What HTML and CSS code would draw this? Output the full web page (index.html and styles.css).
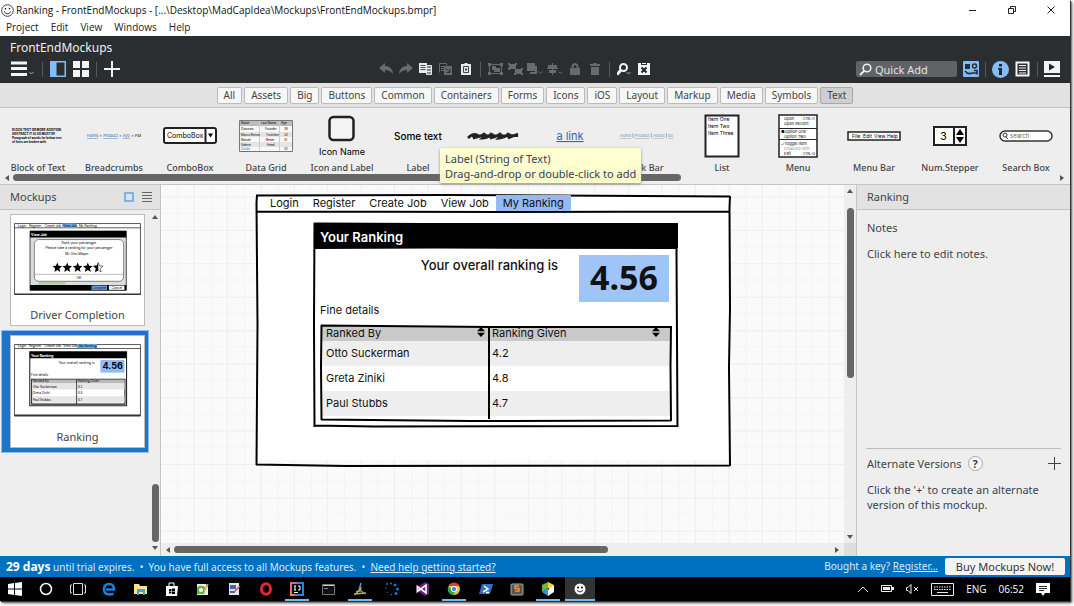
FILE: index.html
```html
<!DOCTYPE html>
<html lang="en">
<head>
  <meta charset="utf-8">
  <title>Ranking - FrontEndMockups</title>
  <link rel="stylesheet" href="styles.css">
</head>
<body>
<div class="window">

  <div class="titlebar">
    <svg class="app-icon" width="13" height="13" viewBox="0 0 13 13"><circle cx="6.5" cy="6.5" r="5.8" fill="#fff" stroke="#444"/><circle cx="4.5" cy="4.8" r=".8"/><circle cx="8.5" cy="4.8" r=".8"/><path d="M3 7.5q3.5 4.5 7 0" fill="none" stroke="#333"/></svg>
    <span class="title">Ranking - FrontEndMockups - [...\Desktop\MadCapIdea\Mockups\FrontEndMockups.bmpr]</span>
    <div class="controls">
      <button aria-label="Minimize"><svg width="8" height="8"><path d="M0 4.5h7" stroke="#222"/></svg></button>
      <button aria-label="Restore"><svg width="8" height="8" fill="none" stroke="#222"><path d="M.5 2.5h5v5h-5zM2.5 2.5v-2h5v5h-2"/></svg></button>
      <button aria-label="Close"><svg width="8" height="8"><path d="M.5.5l7 7M7.5.5l-7 7" stroke="#222"/></svg></button>
    </div>
  </div>

  <nav class="menubar">
    <button>Project</button><button>Edit</button><button>View</button><button>Windows</button><button>Help</button>
  </nav>

  <header class="header">
    <h1>FrontEndMockups</h1>
    <div class="toolbar">
      <div class="tools-left">
        <button aria-label="Menu"><svg width="24" height="16" viewBox="0 0 24 16"><path d="M0 2h16M0 7.500h16M0 13.500h16" stroke="#f4f4f4" stroke-width="3"/><path d="M18.500 11l2 2 2-2" fill="none" stroke="#aaa"/></svg></button>
        <span class="sep"></span>
        <button aria-label="Show navigator"><svg width="16" height="16"><path d="M0 0h16v16H0z" fill="#84bdf5"/><path d="M6.500 1.500h8v13h-8z" fill="#2a2e31"/></svg></button>
        <button aria-label="Show grid"><svg width="16" height="16" fill="#f4f4f4"><path d="M0 0h7v7H0zM9 0h7v7H9zM0 9h7v7H0zM9 9h7v7H9z"/></svg></button>
        <span class="sep"></span>
        <button aria-label="New mockup"><svg width="16" height="16"><path d="M8 0v16M0 8h16" stroke="#f4f4f4" stroke-width="2"/></svg></button>
      </div>
      <div class="tools-mid">
        <button aria-label="Undo"><svg width="14" height="12"><path d="M0 5L6 0v3q7 0 8 8-3-4-8-4v3z" fill="#686b6d"/></svg></button>
        <button aria-label="Redo"><svg width="14" height="12"><path d="M14 5L8 0v3q-7 0-8 8 3-4 8-4v3z" fill="#686b6d"/></svg></button>
        <button aria-label="Copy"><svg width="14" height="12"><path d="M0 0h8v10H0z" fill="#e8e8e8"/><path d="M1.500 2.500h5M1.500 4.500h5M1.500 6.500h5" stroke="#555"/><path d="M7.500 2.500h5v9h-5z" fill="#888" stroke="#e8e8e8"/><path d="M8 5.500h4M8 8.500h4" stroke="#e8e8e8"/></svg></button>
        <button aria-label="Duplicate"><svg width="14" height="12"><path d="M.5 9.500v-9h7v2M2 3.500h3M2 5.500h3M2 7.500h3" fill="none" stroke="#686b6d"/><path d="M5 3h8v9H5z" fill="#686b6d"/><path d="M6.500 5l4 4M11 6v3.500H7.500" stroke="#2a2e31" fill="none"/></svg></button>
        <button aria-label="Paste"><svg width="12" height="12"><path d="M1 1h3l1-1h2l1 1h3v11H1z" fill="#e8e8e8"/><path d="M3.500 3.500h5v6h-5z" fill="none" stroke="#444"/><path d="M5 5.500h2v2H5z" fill="#444"/></svg></button>
        <span class="sep"></span>
        <button aria-label="Group"><svg width="15" height="12" fill="#686b6d"><path d="M1.500 1.500h12v9h-12z" fill="none" stroke="#686b6d"/><path d="M0 0h3v3H0zM12 0h3v3h-3zM0 9h3v3H0zM12 9h3v3h-3zM4 3h4v4H4zM7 5h5v4H6z"/></svg></button>
        <button aria-label="Ungroup"><svg width="15" height="12" fill="#686b6d"><path d="M1 1h7v5H1zM7 6h7v5H7z"/><path d="M0 0h2v2H0zM7 0h2v2H7zM0 5h2v2H0zM13 5h2v2h-2zM13 10h2v2h-2zM6 10h2v2H6z"/></svg></button>
        <button aria-label="Order"><svg width="16" height="12"><path d="M0 0h8v8H0z" fill="#686b6d"/><path d="M9 3v7H3" fill="none" stroke="#686b6d" stroke-width="2"/><path d="M11.500 8.500l2 2 2-2" fill="none" stroke="#686b6d"/></svg></button>
        <button aria-label="Align"><svg width="16" height="12"><path d="M1 2h9v3H1zM2 7h7v3H2z" fill="#686b6d"/><path d="M5.500 0v12M0 5.500h11" stroke="#686b6d"/><path d="M11.500 8.500l2 2 2-2" fill="none" stroke="#686b6d"/></svg></button>
        <button aria-label="Lock"><svg width="10" height="12"><path d="M0 5h10v7H0z" fill="#686b6d"/><path d="M2.500 6V3q2.500-4 5 0v3" fill="none" stroke="#686b6d" stroke-width="2"/></svg></button>
        <button aria-label="Delete"><svg width="10" height="12" fill="#686b6d"><path d="M0 1h3l1-1h2l1 1h3v2H0zM1 4h8v8H1z"/></svg></button>
        <span class="sep"></span>
        <button aria-label="Zoom"><svg width="14" height="13" fill="none"><circle cx="6.500" cy="4.500" r="3.500" stroke="#f4f4f4" stroke-width="2"/><path d="M4 7l-4 4.500" stroke="#f4f4f4" stroke-width="3"/><path d="M9.500 9l2 2 2-2" stroke="#aaa"/></svg></button>
        <button aria-label="Toggle markup"><svg width="12" height="12"><path d="M0 0h3v2h6V0h3v12H0z" fill="#f4f4f4"/><path d="M4 0h4v1H4z" fill="#f4f4f4"/><path d="M3.500 4.500l5 5M8.500 4.500l-5 5" stroke="#222" stroke-width="2"/></svg></button>
      </div>
      <div class="tools-right">
        <label class="quick-add">
          <svg width="13" height="13"><circle cx="8" cy="5" r="3.800" fill="none" stroke="#eee" stroke-width="1.600"/><path d="M5.500 7.500L1 12" stroke="#eee" stroke-width="2"/></svg>
          <input type="text" placeholder="Quick Add" aria-label="Quick Add">
        </label>
        <button aria-label="UI library"><svg width="16" height="16"><rect width="16" height="16" rx="1" fill="#84bdf5"/><path d="M2 3h5v5H2z" fill="#2a2e31"/><circle cx="11.500" cy="5" r="2" fill="none" stroke="#2a2e31" stroke-width="1.500"/><path d="M2 10q3 4 7 2h5M11 9.500h3v4" fill="none" stroke="#2a2e31" stroke-width="1.600"/></svg></button>
        <span class="sep"></span>
        <button aria-label="Information"><svg width="17" height="17"><circle cx="8.500" cy="8.500" r="8.500" fill="#84bdf5"/><path d="M7 3h3v2.500H7zM6 7h4v7H7V8.500H6z" fill="#20262b"/></svg></button>
        <button aria-label="Notes"><svg width="16" height="16"><path d="M1.500 1.500h12v13h-12z" fill="none" stroke="#f4f4f4" stroke-width="2"/><path d="M4 4.500h7M4 7h7M4 9.500h7M4 12h7" stroke="#f4f4f4"/></svg></button>
        <span class="sep"></span>
        <button aria-label="Full screen"><svg width="16" height="16"><path d="M0 0h16v12H0zM0 14h16v2H0z" fill="#f4f4f4"/><path d="M5 2.500l6 3.500-6 3.500z" fill="#20262b"/></svg></button>
      </div>
    </div>
  </header>

  <nav class="tabs">
    <button>All</button><button>Assets</button><button>Big</button><button>Buttons</button><button>Common</button><button>Containers</button><button>Forms</button><button>Icons</button><button>iOS</button><button>Layout</button><button>Markup</button><button>Media</button><button>Symbols</button><button class="active">Text</button>
  </nav>

  <section class="library">
    <ul class="items">
      <li><div class="pic"><svg width="54" height="16" viewBox="0 0 54 16"><g class="tiny" font-weight="bold"><text x="1" y="3">BLOCK TEXT OR MORE ADDITION</text><text x="1" y="7">ABSTRACT IT ALSO MUST BE</text><text x="1" y="11">Paragraph of words for below text</text><text x="1" y="15">of lines are broken with</text></g></svg></div><span>Block of Text</span></li>
      <li><div class="pic"><svg width="54" height="8" viewBox="0 0 54 8"><g class="tiny4"><text x="0" y="5"><tspan class="blue">Home</tspan> &gt; <tspan class="blue">Product</tspan> &gt; <tspan class="blue">Xyz</tspan> &gt; Feature</text></g></svg></div><span>Breadcrumbs</span></li>
      <li><div class="pic"><svg width="54" height="17"><rect x="1" y="1" width="52" height="15" rx="2" fill="#fff" stroke="#222" stroke-width="2"/><path d="M42.500 1v15" stroke="#222" stroke-width="2"/><path d="M45 6.500h5l-2.500 4z"/><text x="4" y="11" font-size="7">ComboBox</text></svg></div><span>ComboBox</span></li>
      <li><div class="pic"><svg width="54" height="32"><path d="M.5.5h53v31H.5z" fill="#f8f8f8" stroke="#777"/><path d="M1 1h52v5H1z" fill="#bbb"/><path d="M1 12h52v5H1zM1 22h52v5H1z" fill="#e4e4e4"/><path d="M20.500 1v30M40.500 1v30" stroke="#ccc"/><g class="tiny"><text x="2" y="4">Name</text><text x="22" y="4">Last Name</text><text x="42" y="4">Age</text><text x="2" y="10">Giacomo</text><text x="26" y="10">Founder</text><text x="45" y="10">39</text><text x="2" y="16">Marco Botton</text><text x="27" y="16">Tuttofare</text><text x="45" y="16">34</text><text x="2" y="21">Mariah</text><text x="27" y="21">Better</text><text x="45" y="21">41</text><text x="2" y="26">Valerie</text><text x="28" y="26">Head</text><text x="2" y="30" class="blue">Guilds</text><text x="45" y="30">20</text></g></svg></div><span>Data Grid</span></li>
      <li><div class="pic"><svg width="54" height="42"><rect x="14.500" y="2" width="24" height="23" rx="4" fill="#f4f4f4" stroke="#222" stroke-width="2.500"/><text x="27" y="40" font-size="9" text-anchor="middle">Icon Name</text></svg></div><span>Icon and Label</span></li>
      <li><div class="pic"><svg width="54" height="16"><text x="27" y="12" font-size="10" font-weight="500" text-anchor="middle">Some text</text></svg></div><span>Label</span>
        <div class="tooltip" role="tooltip">Label (String of Text)<br>Drag-and-drop or double-click to add</div></li>
      <li><div class="pic"><svg width="54" height="10"><path d="M1 7q5-5 9-3t-4 3q7-1 11-4 3 1-1 4 5 0 8-4 4 1-1 4 6-1 10-4 2 1-1 4 7-1 9-4 4 1 0 4l10-4M5 5l46-.500" fill="none" stroke="#222" stroke-width="2.800"/></svg></div><span>Line of Text</span></li>
      <li><div class="pic"><svg width="54" height="16"><text x="27" y="12" font-size="11" text-anchor="middle" class="blue">a link</text></svg></div><span>Link</span></li>
      <li><div class="pic"><svg width="54" height="8" viewBox="0 0 54 8"><g class="tiny4"><text x="1" y="5"><tspan class="pale">Home</tspan> | <tspan class="pale">Product</tspan> | <tspan class="pale">About</tspan> | <tspan class="pale">Blog</tspan></text></g></svg></div><span>Link Bar</span></li>
      <li><div class="pic"><svg width="36" height="44"><path d="M1.500 1.500h33v41h-33z" fill="#fff" stroke="#222" stroke-width="2"/><g font-size="5"><text x="4" y="7">Item One</text><text x="4" y="14">Item Two</text><text x="4" y="21">Item Three</text></g></svg></div><span>List</span></li>
      <li><div class="pic"><svg width="40" height="44"><path d="M1 1h38v42H1z" fill="#fff" stroke="#222" stroke-width="1.500"/><path d="M1 14.500h38M1 25.500h38" stroke="#222"/><g class="tiny4"><text x="6" y="6">Open</text><text x="25" y="6" class="tiny">CTRL+O</text><text x="6" y="11">Open Recent</text><text x="3" y="19">&#9679;Option One</text><text x="6" y="24">Option Two</text><text x="3" y="31">&#10003;Toggle Item</text><text x="6" y="36" fill="#999">Disabled Item</text><text x="6" y="41">Exit</text><text x="25" y="41" class="tiny">CTRL+Q</text></g></svg></div><span>Menu</span></li>
      <li><div class="pic"><svg width="54" height="10"><path d="M1 1h52v8H1z" fill="#fff" stroke="#222" stroke-width="1.500"/><g font-size="5"><text x="5" y="7">File</text><text x="16" y="7">Edit</text><text x="27" y="7">View</text><text x="40" y="7">Help</text></g></svg></div><span>Menu Bar</span></li>
      <li><div class="pic"><svg width="34" height="20"><path d="M1 1h32v18H1zM21 1v18" fill="#fff" stroke="#222" stroke-width="2"/><path d="M23 9h8l-4-6zM23 11h8l-4 6z"/><text x="7" y="14" font-size="11">3</text></svg></div><span>Num.Stepper</span></li>
      <li><div class="pic"><svg width="54" height="12"><rect x="1" y="1" width="52" height="10" rx="5" fill="#fff" stroke="#333" stroke-width="1.500"/><circle cx="6" cy="5" r="2" fill="none" stroke="#333"/><path d="M7 7l2 2" stroke="#333"/><text x="11" y="8" font-size="6" fill="#667">search</text></svg></div><span>Search Box</span></li>
    </ul>
    <div class="hbar library-bar"><i class="arrow left"></i><div class="track"><div class="thumb"></div></div><i class="arrow right"></i></div>
  </section>

  <main class="main">
    <aside class="sidebar">
      <h2 class="panel-head">Mockups
        <span class="view-btns">
          <button aria-label="Thumbnails"><svg width="10" height="10"><path d="M1 1h8v8H1z" fill="none" stroke="#5aa5ea" stroke-width="1.500"/></svg></button>
          <button aria-label="List"><svg width="10" height="12"><path d="M0 1.500h10M0 4.500h10M0 7.500h10M0 10.500h10" stroke="#666"/></svg></button>
        </span>
      </h2>
      <div class="side-body">
        <ul class="thumbs">
          <li><button class="card">
            <svg viewBox="0 0 475 271">
              <path d="M2 2h471v267H2z" fill="#fff" stroke="#333" stroke-width="3"/><path d="M2 18h471" stroke="#333" stroke-width="3"/><path d="M2 267h471" stroke="#333" stroke-width="7"/>
              <path d="M180 2h54v16h-54z" fill="#6fa8f0"/>
              <g font-size="12"><text x="14" y="14">Login</text><text x="56" y="14">Register</text><text x="114" y="14">Create Job</text><text x="184" y="14">View Job</text><text x="243" y="14">My Ranking</text></g>
              <path d="M60 30h360v222H60z" fill="#ddd" stroke="#222" stroke-width="3"/><path d="M60 30h360v24H60z"/>
              <text x="64" y="47" font-size="13" fill="#fff" font-weight="bold">View Job</text>
              <path d="M92 222h100v8H92z" fill="#a8d08a"/>
              <rect x="76" y="62" width="334" height="156" rx="16" fill="#fff" stroke="#666" stroke-width="3"/><path d="M78 192h330" stroke="#888" stroke-width="2"/>
              <g font-size="13" text-anchor="middle"><text x="243" y="78">Rank your passenger</text><text x="243" y="99">Please take a ranking for your passenger</text><text x="235" y="120">Mr Otto Mayer</text><text x="243" y="211">OK</text></g>
              <defs><path id="star" d="M0-18l5 12 13 1-10 9 3 13-11-7-11 7 3-13-10-9 13-1z"/></defs>
              <use href="#star" x="162" y="166"/><use href="#star" x="199" y="166"/><use href="#star" x="238" y="166"/><use href="#star" x="276" y="166"/>
              <use href="#star" x="315" y="166" fill="#fff" stroke="#000" stroke-width="2"/><path d="M315 148v28l-11 7 3-13-10-9 13-1z"/>
              <path d="M60 232h360v20H60z"/><path d="M290 234h58v16h-58z" fill="#6fa8f0"/><path d="M355 234h58v16h-58z" fill="#fff"/>
              <g font-size="12"><text x="292" y="247">Complete</text><text x="365" y="247">Cancel</text></g>
            </svg>
            <span>Driver Completion</span></button></li>
          <li class="selected"><button class="card">
            <svg viewBox="0 0 475 271">
              <path d="M2 2h471v267H2z" fill="#fff" stroke="#333" stroke-width="3"/><path d="M2 17h471" stroke="#333" stroke-width="3"/><path d="M2 267h471" stroke="#333" stroke-width="7"/>
              <path d="M236 0h74v16h-74z" fill="#6fa8f0"/>
              <g font-size="12"><text x="14" y="13">Login</text><text x="56" y="13">Register</text><text x="114" y="13">Create Job</text><text x="184" y="13">View Job</text><text x="243" y="13">My Ranking</text></g>
              <path d="M59 29h362v202H59z" fill="#fff" stroke="#222" stroke-width="4"/><path d="M59 29h362v24H59z"/>
              <text x="64" y="47" font-size="13" fill="#fff" font-weight="bold">Your Ranking</text>
              <text x="166" y="76" font-size="13">Your overall ranking is</text>
              <path d="M323 60h90v47h-90z" fill="#8fbcf7"/><text x="331" y="95" font-size="34" font-weight="bold">4.56</text>
              <text x="64" y="119" font-size="12">Fine details</text>
              <path d="M66 132h349v93H66z" fill="#fff" stroke="#222" stroke-width="4"/><path d="M68 134h345v12H68z" fill="#bbb"/><path d="M68 146h345v24H68zM68 195h345v24H68z" fill="#e6e6e6"/><path d="M234 132v93" stroke="#222" stroke-width="3"/>
              <g font-size="12"><text x="70" y="143">Ranked By</text><text x="238" y="143">Ranking Given</text><text x="70" y="163">Otto Suckerman</text><text x="238" y="163">4.2</text><text x="70" y="188">Greta Ziniki</text><text x="238" y="188">4.8</text><text x="70" y="213">Paul Stubbs</text><text x="238" y="213">4.7</text></g>
            </svg>
            <span>Ranking</span></button></li>
        </ul>
        <div class="vbar side-bar"><i class="arrow up"></i><div class="track"><div class="thumb"></div></div><i class="arrow down"></i></div>
      </div>
    </aside>

    <section class="stage">
      <div class="canvas">
        <svg class="grid-lines" width="100%" height="100%">
          <defs><pattern id="grid" x="0" y="11.500" width="33.430" height="33.430" patternUnits="userSpaceOnUse"><path d="M16.700 0v34M0 16.700h34" stroke="#f4f4f4"/><path d="M33 0v34M0 .5h34" stroke="#eeeeee"/></pattern></defs>
          <rect width="100%" height="100%" fill="url(#grid)"/>
        </svg>
        <div class="mockup">
          <nav class="mock-nav"><a href="#">Login</a><a href="#">Register</a><a href="#">Create Job</a><a href="#">View Job</a><a href="#" class="current">My Ranking</a></nav>
          <div class="dialog">
            <h3>Your Ranking</h3>
            <div class="overall"><p>Your overall ranking is</p><strong>4.56</strong></div>
            <p class="fine">Fine details</p>
            <table>
              <thead><tr>
                <th>Ranked By<button aria-label="Sort by ranked by"><svg width="8" height="10"><path d="M0 4.200h8L4 0zM0 5.800h8L4 10z"/></svg></button></th>
                <th>Ranking Given<button aria-label="Sort by ranking given"><svg width="8" height="10"><path d="M0 4.200h8L4 0zM0 5.800h8L4 10z"/></svg></button></th>
              </tr></thead>
              <tbody>
                <tr><td>Otto Suckerman</td><td>4.2</td></tr>
                <tr><td>Greta Ziniki</td><td>4.8</td></tr>
                <tr><td>Paul Stubbs</td><td>4.7</td></tr>
              </tbody>
            </table>
          </div>
          <!-- pen strokes -->
          <svg class="strokes" viewBox="0 0 475 272" fill="none" stroke="#000" stroke-width="2">
            <path d="M0 .5L190 0 474 1.500M1 0L.5 8 1.500 130 .5 270M0 269.500l90 1.500 384-.5M474 1l-.5 12 .5 100-1 60 1 98M1 16.500l250 .5 223-.5"/>
            <path d="M58 28.500l110 .5 253 0M58.500 28L58 130l.5 102M58 230.500l60 1 303-.5M421 28l-.5 30 1 174M58 53l120-.5 243 .5"/>
            <path d="M65 130.500l170 1.500 180 0M65.500 130l-.5 40 .5 55M65 224.500l150 1.500 200-.5M415 131l-.5 40 .5 55M233 131v93"/>
          </svg>
        </div>
      </div>
      <div class="vbar canvas-v"><i class="arrow up"></i><div class="track"><div class="thumb"></div></div><i class="arrow down"></i></div>
      <div class="hbar canvas-h"><i class="arrow left"></i><div class="track"><div class="thumb"></div></div><i class="arrow right"></i></div>
      <div class="corner"></div>
    </section>

    <aside class="inspector">
      <h2 class="panel-head">Ranking</h2>
      <label for="notes">Notes</label>
      <textarea id="notes">Click here to edit notes.</textarea>
      <div class="versions">
        <div class="versions-head">Alternate Versions <button class="help" aria-label="Help">?</button>
          <button class="add" aria-label="Add version"><svg width="13" height="13"><path d="M6.500 0v13M0 6.500h13" stroke="#444"/></svg></button></div>
        <p>Click the '+' to create an alternate version of this mockup.</p>
      </div>
    </aside>
  </main>

  <div class="trial">
    <p><b>29 days</b> until trial expires. &nbsp;&bull;&nbsp; You have full access to all Mockups features. &nbsp;&bull;&nbsp; <a href="#">Need help getting started?</a></p>
    <p class="buy">Bought a key? <a href="#">Register...</a></p>
    <button>Buy Mockups Now!</button>
  </div>

  <footer class="taskbar">
    <div class="apps">
      <button aria-label="Start"><svg width="14" height="14" fill="#fff"><path d="M0 2l6-1v5.500H0zM7 1l7-1v6.500H7zM0 7.500h6V13l-6-1zM7 7.500h7V14l-7-1z"/></svg></button>
      <button aria-label="Cortana"><svg width="14" height="14"><circle cx="7" cy="7" r="5.500" fill="none" stroke="#fff" stroke-width="1.500"/></svg></button>
      <button aria-label="Task view"><svg width="16" height="12" fill="none" stroke="#ddd"><path d="M3.500.5h9v11h-9zM2 2H.5v8H2M14 2h1.500v8H14"/></svg></button>
      <button aria-label="Edge"><svg width="14" height="14"><path d="M4 7.500h8q0-5.500-5-5.500T2 7.500Q2 12.500 7.500 12.500q2.500 0 4-1" fill="none" stroke="#1681dc" stroke-width="2.500"/></svg></button>
      <button aria-label="Explorer"><svg width="14" height="12"><path d="M0 1h5l1 2h7v8H0z" fill="#ffe389"/><path d="M3 6h8v6H9V9H5v3H3z" fill="#3ca5e0"/></svg></button>
      <button aria-label="Store"><svg width="14" height="14"><path d="M1 4h12l-1 10H1z" fill="#fff"/><path d="M4 5V1h5v4" fill="none" stroke="#fff"/><path d="M4 7h2.500v2H4zM7 6.500h3V9H7zM4 9.500h2.500v2H4zM7 9.500h3v2.500H7z"/></svg></button>
      <button aria-label="Notepad++"><svg width="14" height="14"><path d="M1 2h9l2 3v8H1z" fill="#eee"/><path d="M1 5q5-3 9 1l-2 6H1z" fill="#62b53a"/><path d="M12 2L8 9" stroke="#e3a92b" stroke-width="1.500"/><circle cx="5" cy="8" r="2" fill="#fff"/></svg></button>
      <button aria-label="Editor"><svg width="14" height="14"><path d="M1 1h10v12H1z" fill="#dfe6f2"/><path d="M2 3h6v4H2zM2 9h5v2H2z" fill="#3c67ae"/><path d="M12 4L5 11" stroke="#d9483b" stroke-width="1.500"/></svg></button>
      <button aria-label="Opera"><svg width="14" height="14"><ellipse cx="7" cy="7" rx="4.500" ry="5.200" fill="none" stroke="#e32636" stroke-width="3"/></svg></button>
      <button class="open" aria-label="IntelliJ IDEA"><svg width="14" height="14"><path d="M0 0h10l4 4v10H0z" fill="#ee5a8a"/><path d="M7 0h7v14H5z" fill="#2d7fe0"/><path d="M0 8l3 6H0z" fill="#f08b2c"/><path d="M2 2h10v10H2z"/><path d="M4 4h2M5 4v4M4 8h2M8 4h2v4H8M4 10.500h4" stroke="#fff" fill="none"/></svg></button>
      <button aria-label="Command prompt"><svg width="13" height="11"><path d="M.5.5h12v10H.5z" fill="#111" stroke="#777"/><path d="M1 1.500h11" stroke="#ccc"/><path d="M2 4.500h4" stroke="#888"/></svg></button>
      <button class="open" aria-label="Designer"><svg width="14" height="14" fill="none"><path d="M8 1L6 8l-4 5M7 8l5 4" stroke="#4f9bd0" stroke-width="1.500"/><path d="M1 12l12-1M3 10l4-1 1-4" stroke="#cfa936" stroke-width="1.500"/></svg></button>
      <button aria-label="Loader"><svg width="14" height="14" fill="#1679cf"><circle cx="2" cy="2" r="1"/><circle cx="6" cy="1.500" r="1"/><circle cx="10" cy="3" r="1.500"/><circle cx="12.500" cy="7" r="1.500"/><circle cx="11" cy="11.500" r="1.500"/><circle cx="6.500" cy="12.500" r=".8"/><circle cx="2.500" cy="10.500" r=".6"/><circle cx="1" cy="6" r=".7"/></svg></button>
      <button aria-label="Visual Studio"><svg width="14" height="14"><path d="M0 3l3 1 6-4 4 2v10l-4 2-6-4-3 1z" fill="#68217a"/><path d="M1.500 4.500v5L10 3v8z" fill="none" stroke="#fff" stroke-width="1.600"/></svg></button>
      <button class="open" aria-label="Chrome"><svg width="14" height="14"><circle cx="7" cy="7" r="6" fill="#f2c22b"/><path d="M1.500 4a6 6 0 0 1 11 0H7z" fill="#e04030"/><path d="M1.500 4a6 6 0 0 0 5 9L8 9 5 8z" fill="#35a352"/><circle cx="7" cy="7" r="2.700" fill="#4285f4" stroke="#fff"/></svg></button>
      <button aria-label="PowerShell"><svg width="14" height="12"><path d="M3 1h11l-3 10H0z" fill="#3270c8"/><path d="M5 3l4 3-5 3M7 9.500h3" fill="none" stroke="#fff" stroke-width="1.500"/></svg></button>
      <button aria-label="Sublime Text"><svg width="14" height="13"><rect x="1" y="1" width="12" height="11" rx="1" fill="#555" stroke="#aaa"/><path d="M9 3H5v2.500h4V8H5" fill="none" stroke="#f39632" stroke-width="1.500"/></svg></button>
      <button class="open" aria-label="Cube"><svg width="14" height="14"><path d="M7 0l6 3-3 5-3-2z" fill="#ffd51f"/><path d="M7 0L1 3v7l6-4z" fill="#65ba45"/><path d="M1 10l6 4V6z" fill="#2898d8"/><path d="M7 14l6-4V3L7 8z" fill="#fff"/></svg></button>
      <button class="open focused" aria-label="Balsamiq Mockups"><svg width="12" height="12"><circle cx="6" cy="6" r="5.500" fill="#fff"/><circle cx="4" cy="4.500" r="1"/><circle cx="8" cy="4.500" r="1"/><path d="M3 7.500q3 3 6 0" fill="none" stroke="#333"/></svg></button>
    </div>
    <div class="tray">
      <svg width="12" height="8"><path d="M1 7l5-5 5 5" fill="none" stroke="#ddd"/></svg>
      <svg width="13" height="8"><path d="M.5.5h10v6H.5z" fill="none" stroke="#eee"/><path d="M2 2h7v3H2zM11 2h2v3h-2z" fill="#eee"/></svg>
      <svg width="13" height="10" fill="none" stroke="#eee"><path d="M.5 3.500H2L5 .5v9l-3-3H.5zM8 3l4 4M12 3L8 7"/></svg>
      <svg width="23" height="13" fill="none" stroke="#eee"><path d="M.5.5h22v12H.5z"/><path d="M3 4h17M3 6.500h17" stroke-dasharray="1.500 1"/><path d="M6 9.500h11"/></svg>
      <span>ENG</span>
      <span>06:52</span>
      <svg width="14" height="13"><path d="M0 0h14v10H9l-2 3-2-3H0z" fill="#fff"/><path d="M3 3.500h8M3 5.500h8M3 7.500h5" stroke="#222"/></svg>
    </div>
  </footer>
</div>
</body>
</html>
```
FILE: styles.css
```css
* {
  box-sizing: border-box;
}
body {
  margin: 0;
  height: 100vh;
  padding: 0 4px 5px 0;
  background: #fff;
  overflow: hidden;
  font: 11px/15px "Noto Sans", "Open Sans", sans-serif;
  color: #444;
}
h1, h2, h3, p, ul {
  margin: 0;
  padding: 0;
  font-size: 11px;
  font-weight: normal;
}
ul {
  list-style: none;
}
button {
  border: 0;
  margin: 0;
  padding: 0;
  background: none;
  font: inherit;
  color: inherit;
}
svg {
  display: block;
}
svg text {
  font-family: Inter, sans-serif;
}
.window {
  display: flex;
  flex-direction: column;
  height: 100%;
  box-shadow: 1px 1px 1px #333, 2px 2px 3px #555;
}

/* title and menu */
.titlebar {
  display: flex;
  align-items: center;
  height: 20px;
  background: #fff;
  color: #111;
}
.app-icon {
  margin: 0 2px 0 1px;
}
.title {
  flex: 1;
  font-family: "Open Sans", sans-serif;
  font-size: 10px;
}
.controls {
  display: flex;
}
.controls button {
  display: flex;
  justify-content: center;
  width: 39px;
}
.menubar {
  display: flex;
  gap: 12px;
  height: 16px;
  padding: 0 6px 1px;
  background: #fff;
  font-family: "Open Sans", sans-serif;
  font-size: 10px;
  color: #222;
}

/* dark header */
.header {
  height: 47px;
  padding-top: 4px;
  background: #2a2e31;
}
.header h1 {
  padding-left: 10px;
  font-size: 12px;
  line-height: 15px;
  color: #eee;
}
.toolbar {
  display: grid;
  grid-template-columns: 19fr 278px 21fr;
  align-items: center;
  height: 28px;
}
.toolbar button {
  display: flex;
  justify-content: center;
}
.tools-left, .tools-mid, .tools-right {
  display: flex;
  align-items: center;
}
.tools-left {
  gap: 7px;
  padding-left: 11px;
}
.tools-mid button {
  width: 20px;
}
.tools-right {
  justify-content: flex-end;
  gap: 6px;
  padding-right: 10px;
}
.sep {
  width: 1px;
  height: 15px;
  background: #555a5d;
}
.tools-mid .sep {
  margin: 0 4px;
}
.quick-add {
  display: flex;
  align-items: center;
  width: 101px;
  height: 16px;
  padding-left: 3px;
  border-radius: 2px;
  background: #5f6365;
}
.quick-add input {
  width: 80px;
  padding: 0 0 0 3px;
  border: 0;
  background: none;
  font: inherit;
}
.quick-add input::placeholder {
  color: #e4e4e4;
}

/* category tabs */
.tabs {
  display: flex;
  justify-content: center;
  align-items: center;
  gap: 2px;
  height: 25px;
  border-bottom: 1px solid #c4c4c4;
  background: #e2e2e2;
}
.tabs button {
  height: 17px;
  padding: 0 6px;
  border: 1px solid #bbb;
  border-radius: 2px;
  background: #f7f7f7;
  font-size: 10px;
  line-height: 14px;
}
.tabs .active {
  border-color: #aaa;
  background: #cfcfcf;
}

/* control library */
.library {
  height: 77px;
  border-bottom: 1px solid #c4c4c4;
  background: #eee;
}
.items {
  display: grid;
  grid-template-columns: repeat(14, 1fr);
  height: 65px;
  padding-right: 6px;
}
.items li {
  position: relative;
  text-align: center;
  font-size: 9px;
  font-weight: 500;
  line-height: 10px;
}
.pic {
  display: flex;
  justify-content: center;
  align-items: center;
  height: 55px;
  font-weight: normal;
}
.tiny {
  font-size: 3px;
}
.tiny4 {
  font-size: 4px;
}
.blue {
  fill: #2a6ba8;
  text-decoration: underline;
}
.pale {
  fill: #6d93b5;
  text-decoration: underline;
}
.tooltip {
  position: absolute;
  z-index: 5;
  left: 60px;
  top: 40px;
  padding: 3px 5px 2px;
  border-radius: 2px;
  background: rgba(255, 255, 204, .95);
  box-shadow: 0 1px 3px #888;
  font-size: 11px;
  font-weight: normal;
  line-height: 15px;
  text-align: left;
  white-space: nowrap;
  color: #345;
}

/* scrollbars */
.hbar, .vbar {
  display: flex;
  align-items: center;
}
.vbar {
  flex-direction: column;
}
.track {
  flex: 1;
}
.thumb {
  border-radius: 4px;
  background: #666;
}
.hbar .thumb {
  height: 7px;
}
.vbar .thumb {
  width: 7px;
}
.arrow {
  border: 3px solid transparent;
}
.left {
  border-left: 0;
  border-right: 4px solid #555;
}
.right {
  border-right: 0;
  border-left: 4px solid #555;
}
.up {
  border-top: 0;
  border-bottom: 4px solid #555;
}
.down {
  border-bottom: 0;
  border-top: 4px solid #555;
}
.library-bar {
  gap: 4px;
  padding: 1px 6px 0 5px;
}
.library-bar .thumb {
  width: 64%;
}

.main {
  flex: 1;
  display: flex;
  min-height: 0;
}
.panel-head {
  height: 25px;
  padding: 0 10px;
  border-bottom: 1px solid #c4c4c4;
  background: #e2e2e2;
  line-height: 24px;
}

/* mockup list */
.sidebar {
  display: flex;
  flex-direction: column;
  flex: 0 0 161px;
  border-right: 1px solid #c4c4c4;
  background: #eee;
}
.sidebar .panel-head, .view-btns {
  display: flex;
  justify-content: space-between;
  align-items: center;
}
.sidebar .panel-head {
  padding-right: 8px;
}
.view-btns {
  gap: 8px;
}
.side-body {
  flex: 1;
  display: flex;
}
.thumbs {
  width: 150px;
  padding: 0 1px;
}
.thumbs li {
  padding: 4px 4px 4px 9px;
}
.thumbs .selected {
  padding: 4px 3px 4px 8px;
  border: 1px solid #8fbdf2;
  background: #1c75c9;
}
.card {
  display: block;
  width: 135px;
  padding: 8px 3px 3px;
  border: 1px solid #bbb;
  background: #fff;
  text-align: center;
}
.card svg {
  width: 100%;
  margin-bottom: 12px;
}
.side-bar {
  width: 10px;
  padding: 5px 0 6px;
}
.side-bar .track, .canvas-v .track {
  display: flex;
  flex-direction: column;
}
.side-bar .track {
  justify-content: flex-end;
  padding-bottom: 4px;
}
.side-bar .thumb {
  height: 58px;
}

/* canvas */
.stage {
  flex: 1;
  display: grid;
  grid-template-columns: 1fr 12px;
  grid-template-rows: 1fr 13px;
  min-width: 0;
  background: #eee;
}
.canvas {
  position: relative;
  overflow: hidden;
  background: #fafafa;
}
.grid-lines {
  position: absolute;
}
.canvas-v {
  padding: 4px 0;
}
.canvas-v .track {
  padding-top: 15px;
}
.canvas-v .thumb {
  height: 52%;
}
.canvas-h {
  gap: 4px;
  padding: 0 5px;
}
.canvas-h .thumb {
  width: 66%;
}
.corner {
  background: #ddd;
}

/* the open mockup */
.mockup {
  position: absolute;
  left: 95px;
  top: 10px;
  width: 475px;
  padding-bottom: 37px;
  background: #fff;
  font-family: Inter, sans-serif;
  color: #111;
}
.strokes {
  position: absolute;
  left: 0;
  top: 0;
  width: 100%;
  overflow: visible;
  pointer-events: none;
}
.mock-nav {
  display: flex;
  height: 16px;
  padding-left: 7px;
}
.mock-nav a {
  padding: 0 7px;
  color: inherit;
  line-height: 16px;
  text-decoration: none;
}
.mock-nav .current {
  position: relative;
  z-index: 1;
  background: #94baf2;
}
.dialog {
  margin: 12px 53px 0 58px;
  padding-bottom: 7px;
}
.dialog h3 {
  height: 25px;
  padding-left: 6px;
  background: #000;
  color: #fff;
  font-size: 13px;
  font-weight: 600;
  line-height: 28px;
}
.overall {
  display: flex;
  justify-content: flex-end;
  gap: 21px;
  padding: 7px 9px 1px 0;
}
.overall p {
  padding-top: 3px;
  font-size: 13px;
  font-weight: 500;
}
.overall strong {
  width: 90px;
  height: 47px;
  background: #9fc5f8;
  font-family: "Noto Sans", sans-serif;
  font-size: 34px;
  line-height: 44px;
  text-align: center;
}
.fine {
  padding: 0 6px 8px;
}
.dialog table {
  width: 350px;
  margin-left: 7px;
  border-collapse: collapse;
  table-layout: fixed;
}
.dialog th {
  position: relative;
  height: 15px;
  padding: 0 5px;
  background: #c9c9c9;
  font-weight: normal;
  line-height: 15px;
  text-align: left;
}
.dialog th:first-child {
  width: 168px;
}
.dialog th + th, .dialog td + td {
  padding-left: 3px;
}
.dialog th button {
  position: absolute;
  right: 4px;
  top: 1px;
}
.dialog th + th button {
  right: 11px;
}
.dialog td {
  height: 25px;
  padding: 0 5px;
}
.dialog tbody tr:nth-child(odd) {
  background: #eee;
}

/* notes panel */
.inspector {
  flex: 0 0 214px;
  display: flex;
  flex-direction: column;
  border-left: 1px solid #c4c4c4;
  background: #eee;
}
.inspector label {
  padding: 10px 10px 0;
}
.inspector textarea {
  flex: 1;
  margin: 11px 10px 0;
  padding: 0;
  border: 0;
  resize: none;
  background: none;
  font: inherit;
  color: inherit;
}
.versions {
  height: 108px;
  margin: 0 9px;
  padding: 4px 0 0 1px;
  border-top: 1px solid #bbb;
}
.versions-head {
  display: flex;
  align-items: center;
  gap: 6px;
  height: 20px;
}
.help {
  width: 15px;
  height: 15px;
  border: 1px solid #aaa;
  border-radius: 50%;
  background: #f8f8f8;
  font-weight: bold;
  line-height: 13px;
}
.add {
  margin-left: auto;
}
.versions p {
  padding: 9px 10px 0 0;
  color: #345;
}

/* trial bar */
.trial {
  display: flex;
  align-items: center;
  height: 21px;
  padding: 0 5px 0 6px;
  background: #0070c0;
  color: #dcecf9;
}
.trial p {
  font-size: 10px;
}
.trial b {
  font-size: 12px;
  color: #fff;
}
.trial a {
  color: inherit;
}
.trial .buy {
  margin-left: auto;
}
.trial button {
  width: 120px;
  height: 17px;
  margin-left: 7px;
  border-radius: 2px;
  background: #f4f4f4;
  font-size: 11px;
  color: #333;
}

/* taskbar */
.taskbar {
  display: flex;
  justify-content: space-between;
  height: 24px;
  background: #000;
  color: #fff;
}
.apps {
  flex: 0 0 595px;
  display: flex;
  justify-content: space-between;
}
.apps button {
  display: flex;
  align-items: center;
  justify-content: center;
  width: 30px;
}
.apps .open {
  background: linear-gradient(#76b9ed, #76b9ed) center bottom / 24px 2px no-repeat;
}
.apps .focused {
  background: linear-gradient(#76b9ed, #76b9ed) center bottom / 30px 2px no-repeat #333;
}
.tray {
  display: flex;
  align-items: center;
  gap: 12px;
  padding-right: 20px;
  font-family: "Open Sans", sans-serif;
  font-size: 10px;
}
```
